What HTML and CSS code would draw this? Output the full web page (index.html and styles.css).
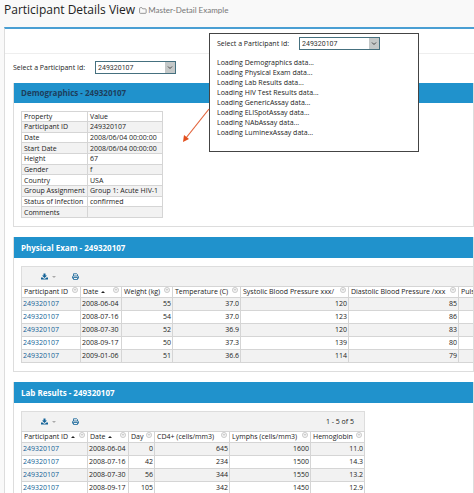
FILE: index.html
```html
<!DOCTYPE html>
<html lang="en">
<head>
    <meta charset="UTF-8">
    <meta name="viewport" content="width=device-width, initial-scale=1.0">
    <title>Participant Details View</title>
    <link rel="stylesheet" href="styles.css">
</head>
<body>
    <!-- shared icons -->
    <svg class="sprite" width="0" height="0" aria-hidden="true">
        <symbol id="download" viewBox="0 0 14 14">
            <path d="M5 1h4v4h3L7 10 2 5h3z"/>
            <path d="M0 9h3l3 2.500h2L11 9h3v4H0z"/>
        </symbol>
        <symbol id="print" viewBox="0 0 14 14">
            <path d="M3 6V1.500h6.500L11 3v3M3 10.500H1V7.500Q1 6 2.500 6h9Q13 6 13 7.500v3h-2M3 9h8v4H3z" fill="none" stroke="currentColor" stroke-width="1.600"/>
        </symbol>
        <symbol id="menu" viewBox="0 0 14 14">
            <circle cx="7" cy="7" r="6" fill="#f4f4f4" stroke="#b5b5b5" stroke-width="1.500"/>
            <path d="M4 5.500h6L7 9z" fill="#bbb"/>
        </symbol>
    </svg>

    <header class="pageHeader">
        <h1>Participant Details View</h1>
        <a class="folder" href="#">
            <svg viewBox="0 0 14 12" aria-hidden="true"><path d="M1 2.500Q1 1 2.500 1H5l1.500 2H11q1.500 0 1.500 1.500v5Q12.500 11 11 11H2.500Q1 11 1 9.500z" fill="none" stroke="currentColor" stroke-width="1.300"/></svg>
            Master-Detail Example
        </a>
    </header>

    <main class="panel">
        <div class="panelTop"></div>
        <div class="panelBody">
            <div class="picker">
                <label for="participant">Select a Participant Id:</label>
                <select id="participant"><option>249320107</option></select>
            </div>

            <!-- Demographics -->
            <section class="card">
                <h2 class="dark">Demographics - 249320107</h2>
                <div class="cardBody">
                    <table class="details">
                        <colgroup><col class="w66"><col class="w75"></colgroup>
                        <thead><tr><th>Property</th><th>Value</th></tr></thead>
                        <tbody>
                            <tr><td>Participant ID</td><td>249320107</td></tr>
                            <tr><td>Date</td><td>2008/06/04 00:00:00</td></tr>
                            <tr><td>Start Date</td><td>2008/06/04 00:00:00</td></tr>
                            <tr><td>Height</td><td>67</td></tr>
                            <tr><td>Gender</td><td>f</td></tr>
                            <tr><td>Country</td><td>USA</td></tr>
                            <tr><td>Group Assignment</td><td>Group 1: Acute HIV-1</td></tr>
                            <tr><td>Status of Infection</td><td>confirmed</td></tr>
                            <tr><td>Comments</td><td></td></tr>
                        </tbody>
                    </table>
                </div>
            </section>

            <!-- Physical Exam -->
            <section class="card">
                <h2>Physical Exam - 249320107</h2>
                <div class="cardBody">
                    <div class="grid">
                        <div class="toolbar">
                            <button type="button" class="export" aria-label="Export"><svg><use href="#download"/></svg></button>
                            <button type="button" aria-label="Print"><svg><use href="#print"/></svg></button>
                        </div>
                        <table class="data">
                            <colgroup><col class="w59"><col class="w41"><col class="w51"><col class="w68"><col class="w108"><col class="w110"><col class="w51"></colgroup>
                            <thead>
                                <tr>
                                    <th><div>Participant ID<svg><use href="#menu"/></svg></div></th>
                                    <th><div><span class="sorted">Date</span><svg><use href="#menu"/></svg></div></th>
                                    <th><div>Weight (kg)<svg><use href="#menu"/></svg></div></th>
                                    <th><div>Temperature (C)<svg><use href="#menu"/></svg></div></th>
                                    <th><div>Systolic Blood Pressure xxx/<svg><use href="#menu"/></svg></div></th>
                                    <th><div>Diastolic Blood Pressure /xxx<svg><use href="#menu"/></svg></div></th>
                                    <th><div>Pulse<svg><use href="#menu"/></svg></div></th>
                                </tr>
                            </thead>
                            <tbody>
                                <tr><td><a href="#">249320107</a></td><td>2008-06-04</td><td>55</td><td>37.0</td><td>120</td><td>85</td><td></td></tr>
                                <tr><td><a href="#">249320107</a></td><td>2008-07-16</td><td>54</td><td>37.0</td><td>123</td><td>86</td><td></td></tr>
                                <tr><td><a href="#">249320107</a></td><td>2008-07-30</td><td>52</td><td>36.9</td><td>120</td><td>83</td><td></td></tr>
                                <tr><td><a href="#">249320107</a></td><td>2008-09-17</td><td>50</td><td>37.3</td><td>139</td><td>80</td><td></td></tr>
                                <tr><td><a href="#">249320107</a></td><td>2009-01-06</td><td>51</td><td>36.6</td><td>114</td><td>79</td><td></td></tr>
                            </tbody>
                        </table>
                    </div>
                </div>
            </section>

            <!-- Lab Results -->
            <section class="card">
                <h2>Lab Results - 249320107</h2>
                <div class="cardBody">
                    <div class="grid">
                        <div class="toolbar">
                            <button type="button" class="export" aria-label="Export"><svg><use href="#download"/></svg></button>
                            <button type="button" aria-label="Print"><svg><use href="#print"/></svg></button>
                            <span class="count">1 - 5 of 5</span>
                        </div>
                        <table class="data">
                            <colgroup><col class="w66"><col class="w41"><col class="w26"><col class="w75"><col class="w81"><col class="w54"></colgroup>
                            <thead>
                                <tr>
                                    <th><div><span class="sorted">Participant ID</span><svg><use href="#menu"/></svg></div></th>
                                    <th><div><span class="sorted">Date</span><svg><use href="#menu"/></svg></div></th>
                                    <th><div>Day<svg><use href="#menu"/></svg></div></th>
                                    <th><div>CD4+ (cells/mm3)<svg><use href="#menu"/></svg></div></th>
                                    <th><div>Lymphs (cells/mm3)<svg><use href="#menu"/></svg></div></th>
                                    <th><div>Hemoglobin<svg><use href="#menu"/></svg></div></th>
                                </tr>
                            </thead>
                            <tbody>
                                <tr><td><a href="#">249320107</a></td><td>2008-06-04</td><td>0</td><td>645</td><td>1600</td><td>11.0</td></tr>
                                <tr><td><a href="#">249320107</a></td><td>2008-07-16</td><td>42</td><td>234</td><td>1500</td><td>14.3</td></tr>
                                <tr><td><a href="#">249320107</a></td><td>2008-07-30</td><td>56</td><td>344</td><td>1550</td><td>13.2</td></tr>
                                <tr><td><a href="#">249320107</a></td><td>2008-09-17</td><td>105</td><td>342</td><td>1450</td><td>12.9</td></tr>
                            </tbody>
                        </table>
                    </div>
                </div>
            </section>
        </div>
    </main>

    <!-- loading state callout -->
    <aside class="callout">
        <div class="picker">
            <label for="participantLoading">Select a Participant Id:</label>
            <select id="participantLoading"><option>249320107</option></select>
        </div>
        <ul>
            <li>Loading Demographics data...</li>
            <li>Loading Physical Exam data...</li>
            <li>Loading Lab Results data...</li>
            <li>Loading HIV Test Results data...</li>
            <li>Loading GenericAssay data...</li>
            <li>Loading ELISpotAssay data...</li>
            <li>Loading NAbAssay data...</li>
            <li>Loading LuminexAssay data...</li>
        </ul>
        <svg class="arrow" viewBox="0 0 28 36" aria-hidden="true">
            <path d="M27 1 4 30" stroke="#e2643c" stroke-width="1.200"/>
            <path d="M1 34l1-7 5 4z" fill="#e2501e"/>
        </svg>
    </aside>
</body>
</html>
```
FILE: styles.css
```css
* {
    box-sizing: border-box;
}

html {
    overflow: hidden;
}

body {
    margin: 0;
    background-color: #f9f9f9;
    color: #222;
    font-family: "Open Sans", sans-serif;
    font-size: 7px;
    line-height: 10px;
}

a {
    color: #125f96;
    text-decoration: none;
}

.sprite {
    position: absolute;
}

/* page title */
.pageHeader {
    display: flex;
    align-items: center;
    gap: 4px;
    height: 27px;
    padding: 0 4px 7px;
}

h1 {
    margin: 0;
    font-size: 12px;
    font-weight: 400;
    line-height: 20px;
}

.folder {
    display: flex;
    align-items: center;
    gap: 1px;
    color: #777;
    font-family: Lato, sans-serif;
    font-size: 8px;
}

.folder svg {
    width: 8px;
    height: 7px;
}

/* main panel */
.panel {
    margin-left: 4px;
    border-top: 2px solid #4a9fd3;
    border-left: 1px solid #ddd;
    background-color: #fff;
}

.panelTop {
    height: 25px;
    border-bottom: 1px solid #eee;
}

.panelBody {
    padding: 7px 0 0 8px;
}

.picker {
    display: flex;
    align-items: center;
    gap: 10px;
}

.picker select {
    appearance: none;
    width: 81px;
    height: 13px;
    padding: 0 2px;
    border: 1px solid #45707f;
    border-radius: 0;
    background: url("data:image/svg+xml,%3Csvg xmlns='http://www.w3.org/2000/svg' width='10' height='11'%3E%3Crect width='10' height='11' fill='%23c4c8c8'/%3E%3Cpath d='M3 4.500l2 2 2-2' fill='none' stroke='%23444'/%3E%3C/svg%3E") right center no-repeat #fff;
    color: #333;
    font-family: Roboto, sans-serif;
    font-size: 7px;
    line-height: 10px;
}

/* sections */
.card {
    margin-bottom: 10px;
    border: 1px solid #ddd;
    border-top: 0;
}

.picker + .card {
    margin-top: 9px;
}

.card h2 {
    margin: 0;
    padding: 0 7px;
    background-color: #2092cc;
    color: #fff;
    font-size: 8px;
    font-weight: 700;
    line-height: 21px;
}

.card h2.dark {
    color: #1d3e5c;
    line-height: 20px;
}

.cardBody {
    padding: 8px 0 8px 7px;
    overflow: hidden;
}

/* tables */
table {
    table-layout: fixed;
    width: 0;
    border-collapse: collapse;
}

th,
td {
    padding: 0 2px;
    border: 1px solid #d5d5d5;
    font-weight: 400;
    text-align: left;
    white-space: nowrap;
}

.details {
    height: 107px;
    line-height: 9px;
}

.details tbody tr:nth-child(odd),
.data tbody tr:nth-child(odd) {
    background-color: #f2f2f2;
}

.grid {
    width: max-content;
    background-color: #fff;
}

.toolbar {
    display: flex;
    align-items: center;
    gap: 16px;
    height: 20px;
    padding: 0 10px 0 19px;
    border: 1px solid #ddd;
    border-bottom: 0;
    background-color: #f2f2f2;
}

.toolbar button {
    display: flex;
    align-items: center;
    gap: 4px;
    padding: 0;
    border: 0;
    background: none;
    color: #126297;
}

.toolbar svg {
    width: 7px;
    height: 7px;
    fill: currentColor;
}

.export::after {
    content: "";
    border: 2px solid transparent;
    border-top-color: #aaa;
    border-bottom: 0;
}

.count {
    margin-left: auto;
}

.data tr {
    height: 13px;
}

.data thead tr {
    height: 11px;
}

.data th div {
    display: flex;
    justify-content: space-between;
    line-height: 10px;
}

.data th svg {
    flex: none;
    width: 6px;
    height: 6px;
}

.sorted::after {
    content: "";
    display: inline-block;
    margin-left: 3px;
    border: 2px solid transparent;
    border-bottom-color: #222;
    border-top: 0;
    vertical-align: middle;
}

.data td {
    padding: 0 1px;
    text-align: right;
}

.data td:nth-child(-n+2) {
    text-align: left;
}

.w26 { width: 26px; }
.w41 { width: 41px; }
.w51 { width: 51px; }
.w54 { width: 54px; }
.w59 { width: 59px; }
.w66 { width: 66px; }
.w68 { width: 68px; }
.w75 { width: 75px; }
.w81 { width: 81px; }
.w108 { width: 108px; }
.w110 { width: 110px; }

/* callout over the page */
.callout {
    position: absolute;
    top: 33px;
    left: 209px;
    width: 210px;
    padding: 3px 7px 13px;
    border: 1px solid #444;
    background-color: #fff;
}

.callout ul {
    margin: 8px 0 0;
    padding: 0;
    list-style: none;
}

.arrow {
    position: absolute;
    top: 74px;
    left: -28px;
    width: 28px;
    height: 36px;
}
```
